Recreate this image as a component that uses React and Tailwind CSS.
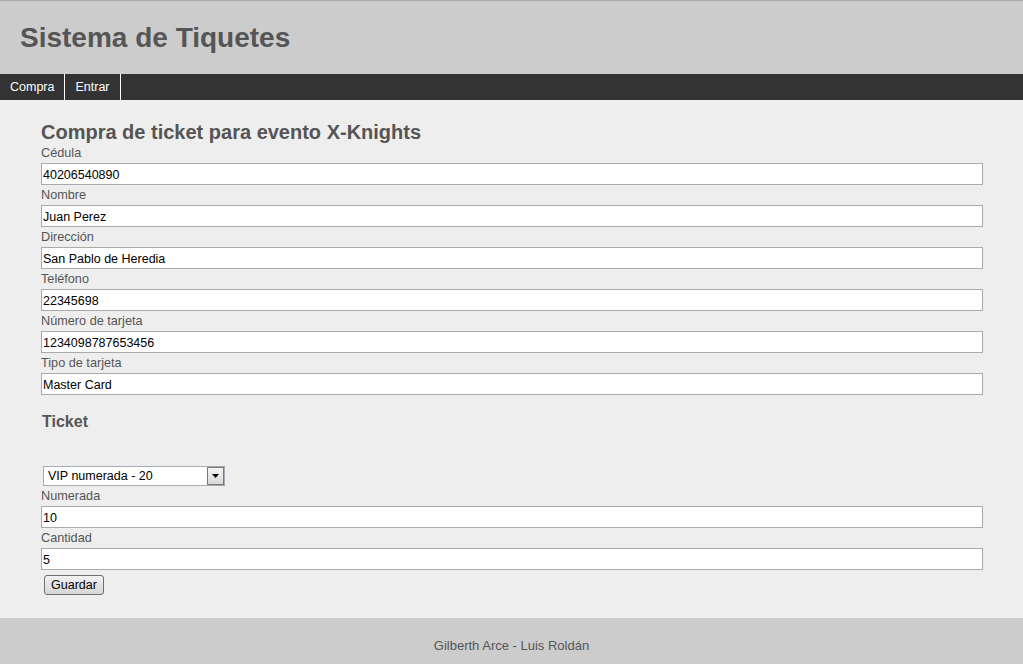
import React from 'react';

const fields = [
  { label: 'Cédula', value: '40206540890' },
  { label: 'Nombre', value: 'Juan Perez' },
  { label: 'Dirección', value: 'San Pablo de Heredia' },
  { label: 'Teléfono', value: '22345698' },
  { label: 'Número de tarjeta', value: '1234098787653456' },
  { label: 'Tipo de tarjeta', value: 'Master Card' },
];

const Field = ({ label, value }) => (
  <div>
    <label className="block h-5 pt-[1px] leading-[19px] text-[12.7px] text-[#555]">{label}</label>
    <input
      readOnly
      value={value}
      className="block w-full h-[22px] border border-[#aaa] bg-white px-[1px] pt-[1px] text-[12.5px] text-black outline-none"
    />
  </div>
);

const App = () => {
  return (
    <div className="min-h-[664px] flex flex-col bg-[#eee]" style={{ fontFamily: '"Liberation Sans", Arial, sans-serif' }}>
      {/* Header */}
      <header className="h-[74px] bg-[#ccc] border-t border-[#aaa] flex items-center px-5">
        <h1 className="text-[28px] font-bold text-[#555] leading-none">Sistema de Tiquetes</h1>
      </header>

      {/* Nav */}
      <nav className="h-[26px] bg-[#333] flex">
        <a className="px-[10px] leading-[26px] text-[12.5px] text-white border-r border-white">Compra</a>
        <a className="px-[10px] leading-[26px] text-[12.5px] text-white border-r border-white">Entrar</a>
      </nav>

      {/* Main */}
      <main className="flex-1 pl-[41px] pr-[40px] pt-[21px] pb-[22px]">
        <h2 className="text-[20px] font-bold text-[#555] leading-[22px]">Compra de ticket para evento X-Knights</h2>
        {fields.map((f) => (
          <Field key={f.label} {...f} />
        ))}

        <h3 className="mt-4 pl-[1px] text-[16px] font-bold text-[#555] leading-[22px]">Ticket</h3>

        <div className="mt-[33px] ml-[2px] w-[182px] h-[20px] flex border border-[#a5acb5] bg-white">
          <span className="flex-1 pl-[4px] text-[12.5px] leading-[19px] text-black">VIP numerada - 20</span>
          <span className="w-[17px] h-[18px] border border-[#777] bg-gradient-to-b from-[#f4f4f4] to-[#d8d8d8] flex items-center justify-center">
            <svg width="7" height="4" viewBox="0 0 7 4"><path d="M0 0h7L3.5 4z" fill="#000" /></svg>
          </span>
        </div>

        <Field label="Numerada" value="10" />
        <Field label="Cantidad" value="5" />

        <button className="mt-[5px] ml-[3px] w-[60px] h-5 border border-[#707070] rounded-[3px] bg-gradient-to-b from-[#f2f2f2] to-[#d6d6d6] text-[12.5px] text-black leading-none">
          Guardar
        </button>
      </main>

      {/* Footer */}
      <footer className="h-[46px] bg-[#ccc] pt-5 text-center text-[13px] leading-4 text-[#555]">
        Gilberth Arce - Luis Roldán
      </footer>
    </div>
  );
};

export default App;
